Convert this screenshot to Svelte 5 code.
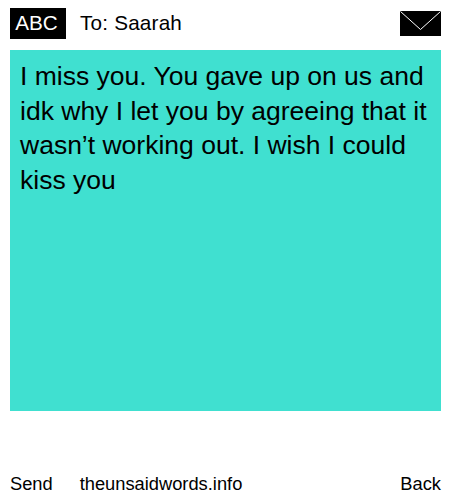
<script>
    let recipient = "Saarah";
    let message = "I miss you. You gave up on us and idk why I let you by agreeing that it wasn’t working out. I wish I could kiss you";
</script>

<div class="page">
    <header class="top">
        <span class="badge">ABC</span>
        <span class="to">To: {recipient}</span>
        <svg class="mail" width="41" height="25" viewBox="0 0 41 25">
            <rect width="41" height="25" fill="#000" />
            <path d="M0.5 0.5 L20.5 18.5 L40.5 0.5" fill="none" stroke="#fff" stroke-width="1" />
        </svg>
    </header>

    <div class="note">{message}</div>

    <footer class="bottom">
        <span class="send">Send</span>
        <span class="site">theunsaidwords.info</span>
        <span class="back">Back</span>
    </footer>
</div>

<style>
    :global(body) {
        margin: 0;
        background: #fff;
    }

    .page {
        width: 450px;
        height: 500px;
        box-sizing: border-box;
        padding: 8px 9px 0 10px;
        display: flex;
        flex-direction: column;
        font-family: "Liberation Sans", Arial, sans-serif;
        font-size: 18.3px;
        color: #000;
    }

    .top {
        display: flex;
        align-items: center;
        height: 31px;
        font-size: 20.7px;
    }

    .badge {
        width: 56px;
        height: 31px;
        box-sizing: border-box;
        padding-right: 3px;
        line-height: 30px;
        text-align: center;
        background: #000;
        color: #fff;
    }

    .to {
        margin-left: 14px;
        padding-bottom: 1px;
        letter-spacing: 0.2px;
    }

    .mail {
        margin-left: auto;
    }

    .note {
        margin-top: 11px;
        height: 361px;
        box-sizing: border-box;
        padding: 9px 10px;
        background: #40e0d0;
        font-size: 26.5px;
        line-height: 34.5px;
    }

    .bottom {
        display: flex;
        margin-top: 62px;
        line-height: 21px;
    }

    .site {
        margin-left: 27px;
    }

    .back {
        margin-left: auto;
    }
</style>
